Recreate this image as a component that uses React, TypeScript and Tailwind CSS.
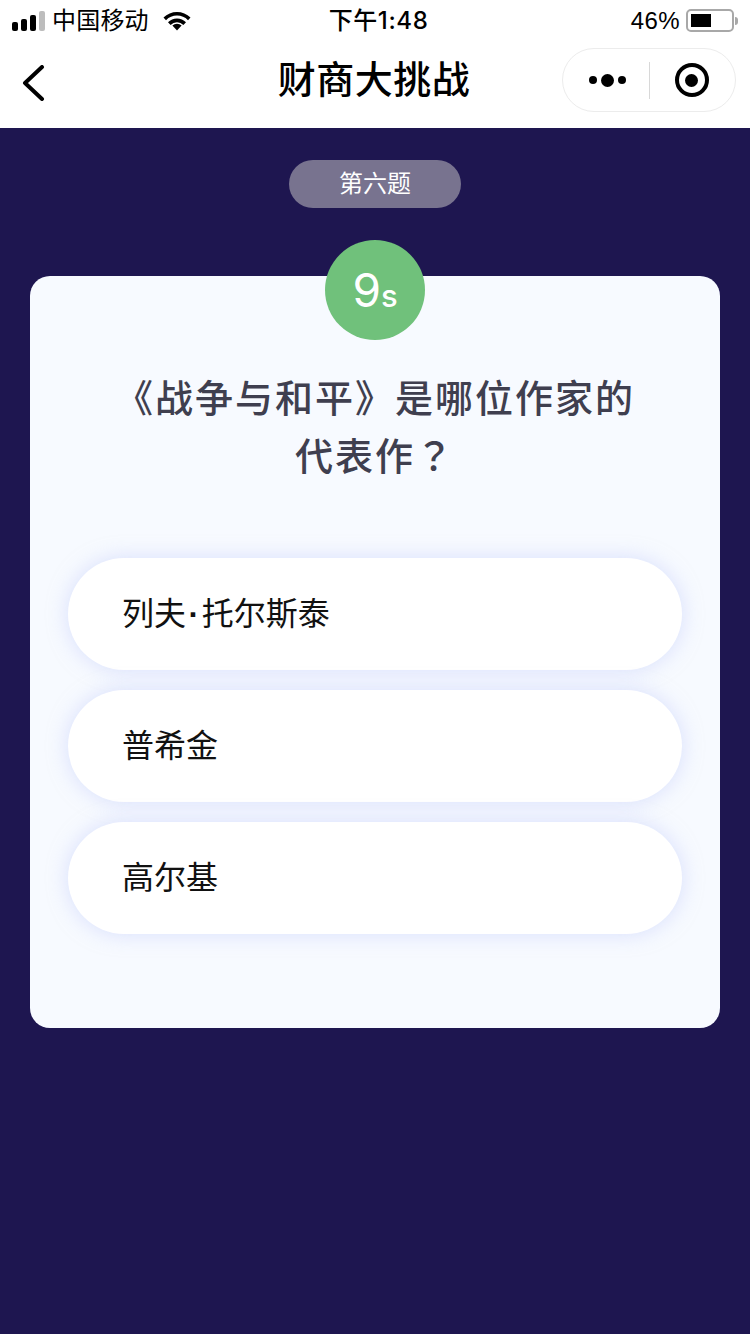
const cjk = "font-['Liberation_Sans','Noto_Sans_CJK_SC',sans-serif]";

function StatusBar() {
  return (
    <div className="grid grid-cols-[1fr_auto_1fr] items-center h-10 px-3 pt-px text-2xl text-black bg-white">
      <div className="flex items-center">
        <div className="flex items-end gap-[3px] h-[20px]">
          <div className="w-[6px] h-[9px] rounded-[2px] bg-black" />
          <div className="w-[6px] h-[12px] rounded-[2px] bg-black" />
          <div className="w-[6px] h-[16px] rounded-[2px] bg-black" />
          <div className="w-[6px] h-[20px] rounded-[2px] bg-[#bdbdbd]" />
        </div>
        <span className="ml-[7px] tracking-[0.2px]">中国移动</span>
        <svg className="ml-[14px]" width="28" height="20" viewBox="0 0 28 20">
          <path d="M14 19.5 l-4.6 -5 a6.6 6.6 0 0 1 9.2 0 z" fill="#000" />
          <path d="M0.5 6.5 a19.2 19.2 0 0 1 27 0 l-2.5 2.7 a15.4 15.4 0 0 0 -22 0 z" fill="#000" />
          <path d="M5 11.2 a12.6 12.6 0 0 1 18 0 l-2.6 2.7 a8.8 8.8 0 0 0 -12.8 0 z" fill="#000" />
        </svg>
      </div>
      <div className="text-center pl-[7px] font-['Inter','Noto_Sans_CJK_SC',sans-serif] font-medium tracking-[0.6px]">
        下午1:48
      </div>
      <div className="flex items-center justify-end">
        <span className="tracking-[0.4px]">46%</span>
        <div className="ml-[6px] flex items-center w-[48px] h-[23px] p-[3px] rounded-[5px] border-2 border-[#a8a8a8]">
          <div className="w-[20px] h-full bg-black" />
        </div>
        <div className="ml-[1px] w-[3px] h-[8px] rounded-r-full bg-[#a8a8a8]" />
      </div>
    </div>
  );
}

function NavBar() {
  return (
    <div className="grid grid-cols-[1fr_auto_1fr] items-center h-[88px] pl-3 pr-[14px] pb-2 bg-white">
      <svg className="ml-2 mt-[6px]" width="26" height="36" viewBox="0 0 26 36" fill="none">
        <path d="M22 2 L5 18 L22 34" stroke="#000" strokeWidth="4" strokeLinecap="round" strokeLinejoin="round" />
      </svg>
      <h1 className="text-[38px] font-medium tracking-[0.5px] text-black">财商大挑战</h1>
      <div className="flex items-center justify-self-end w-[174px] h-[64px] rounded-full border border-[#ececec]">
        <div className="flex items-center justify-center gap-[4px] w-[86px] pl-[2px]">
          <div className="w-[8px] h-[8px] rounded-full bg-black" />
          <div className="w-[13px] h-[13px] rounded-full bg-black" />
          <div className="w-[8px] h-[8px] rounded-full bg-black" />
        </div>
        <div className="w-px h-[37px] bg-[#d8d8d8]" />
        <div className="flex items-center justify-center flex-1 pr-[2px]">
          <div className="flex items-center justify-center w-[34px] h-[34px] rounded-full border-4 border-black">
            <div className="w-[13px] h-[13px] rounded-full bg-black" />
          </div>
        </div>
      </div>
    </div>
  );
}

const options = [
  <>
    列夫<span className="px-[2.5px] font-bold">·</span>托尔斯泰
  </>,
  "普希金",
  "高尔基",
];

export default function App() {
  return (
    <div className={`w-[750px] h-[1334px] overflow-hidden flex flex-col bg-[#1e1650] ${cjk}`}>
      <StatusBar />
      <NavBar />
      <div className="flex flex-col items-center pt-8">
        <div className="flex items-center justify-center w-[172px] h-12 rounded-full bg-[#78738f] text-2xl text-white">
          第六题
        </div>
        <div className="relative mt-[68px] w-[690px] h-[752px] rounded-[20px] bg-[#f7faff] px-[38px] pt-[94px]">
          <div className="absolute -top-9 left-[295px] flex items-baseline justify-center pt-[22px] w-[100px] h-[100px] rounded-full bg-[#70c17b] text-white font-['Inter',sans-serif]">
            <span className="text-[46px] leading-[56px]">9</span>
            <span className="text-[31px] leading-[56px] font-medium">s</span>
          </div>
          <p className="text-center text-[38px] leading-[58px] font-medium tracking-[2px] text-[#3f3f4f]">
            《战争与和平》是哪位作家的
            <br />
            代表作<span className="leading-none font-['Noto_Sans_CJK_TC',sans-serif]">？</span>
          </p>
          <div className="flex flex-col gap-5 mt-[72px]">
            {options.map((option, i) => (
              <div
                key={i}
                className="flex items-center h-[112px] pl-[54px] rounded-[56px] bg-white text-[32px] text-[#111111] shadow-[0_0_20px_rgba(185,195,250,0.5)]"
              >
                <span>{option}</span>
              </div>
            ))}
          </div>
        </div>
      </div>
    </div>
  );
}
